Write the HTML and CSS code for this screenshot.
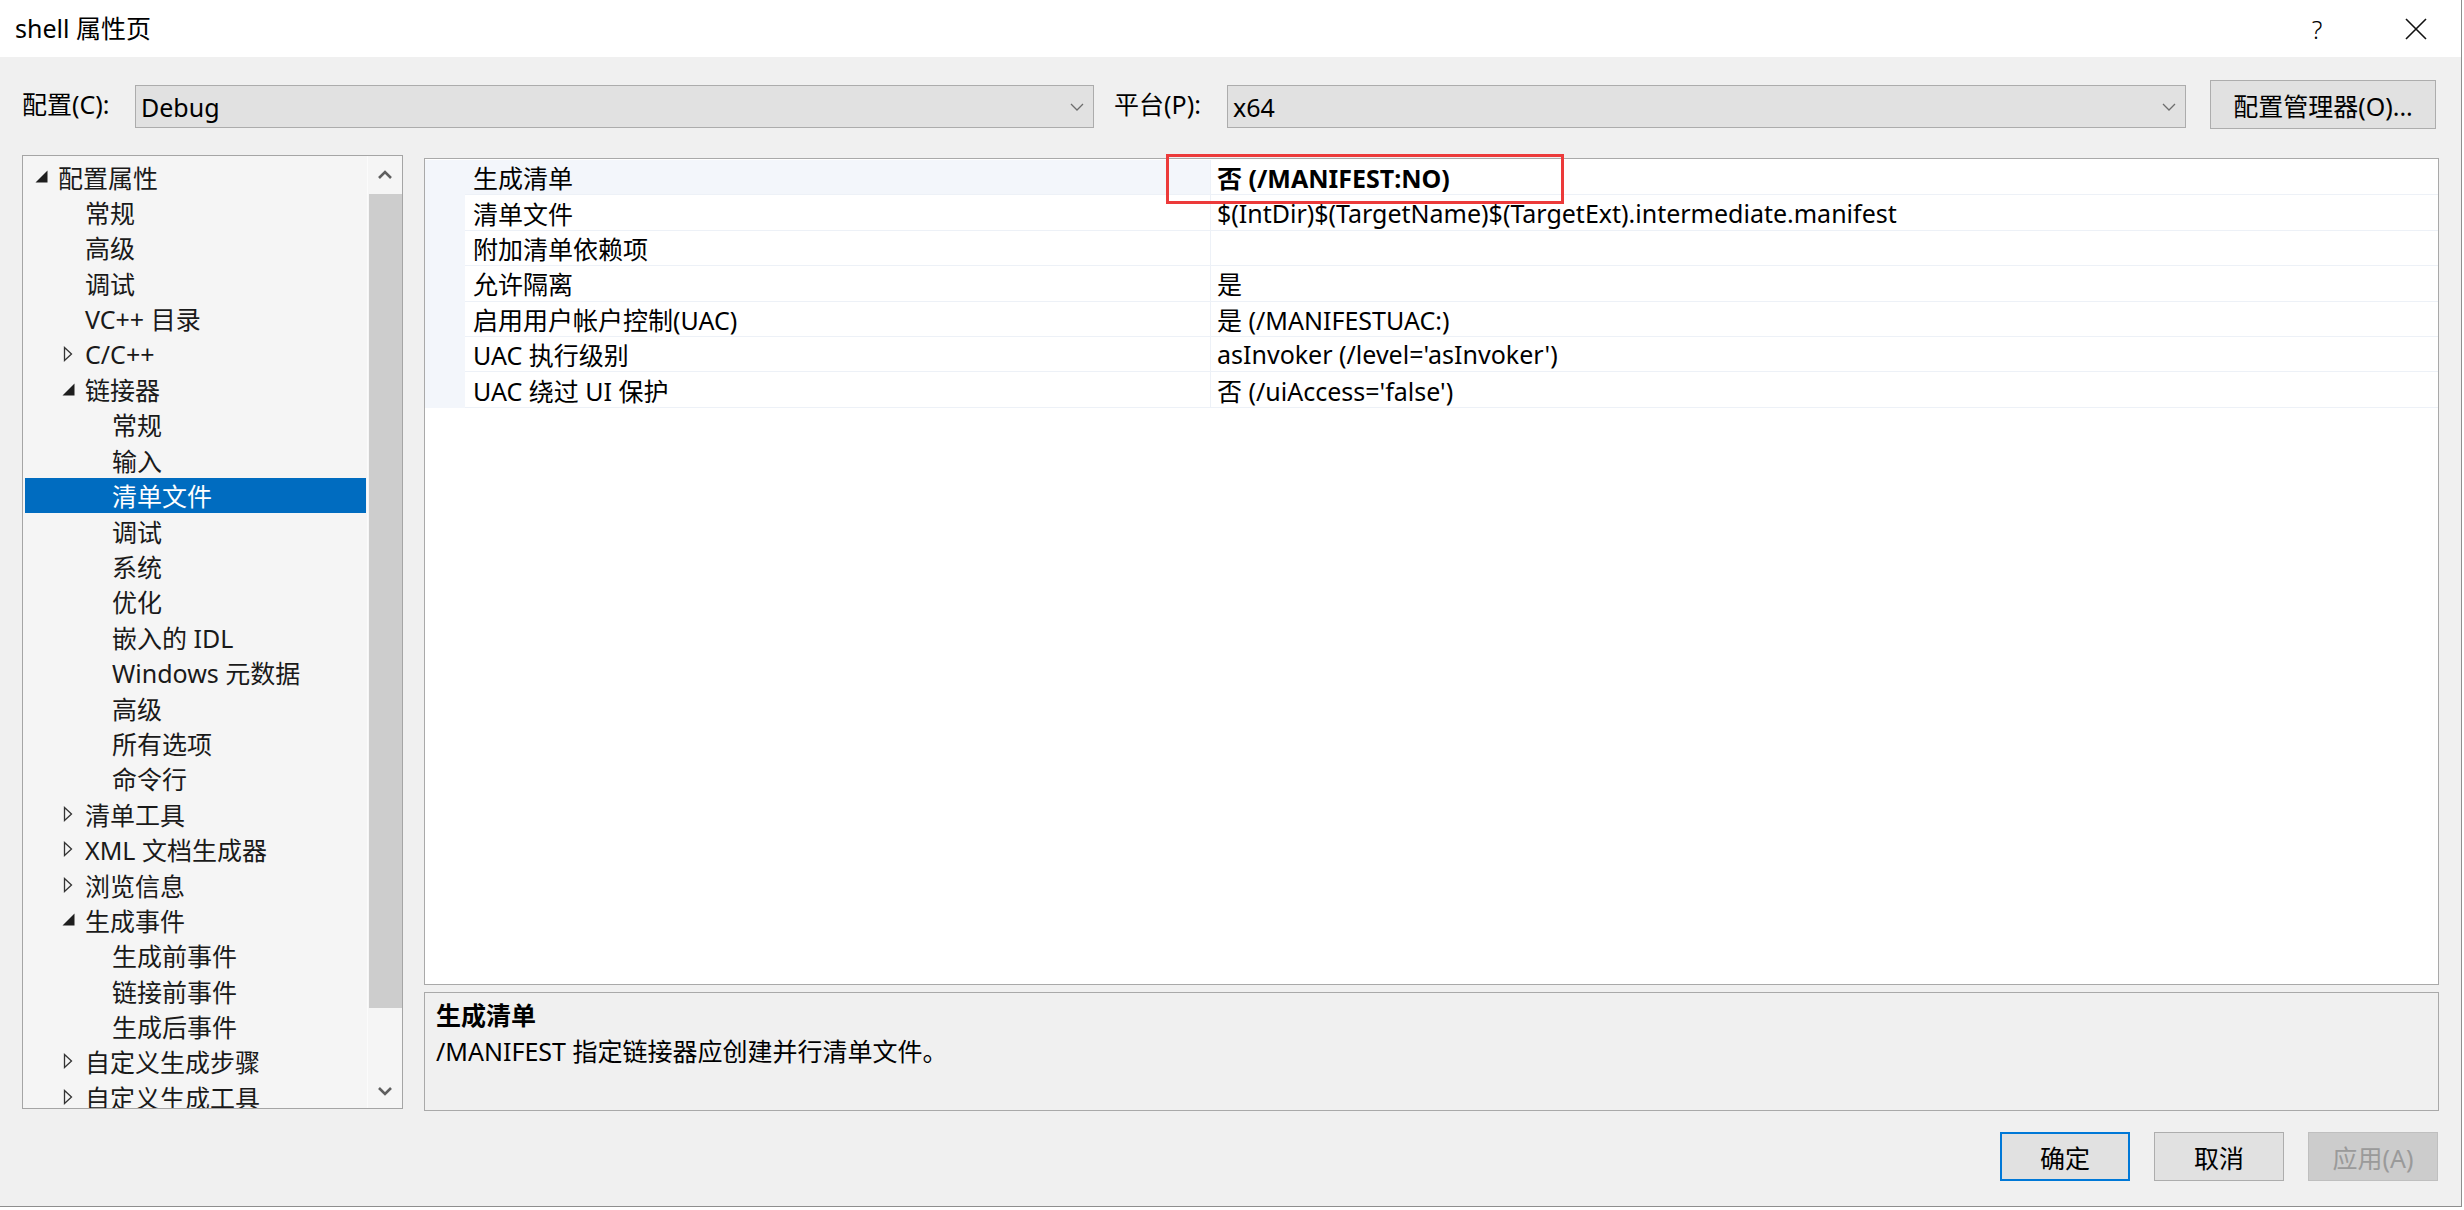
FILE: index.html
```html
<!DOCTYPE html>
<html lang="zh-CN">
<head>
<meta charset="utf-8">
<title>shell 属性页</title>
<link rel="stylesheet" href="styles.css">
</head>
<body>
<div class="dialog">
  <div class="titlebar">
    <span class="title">shell 属性页</span>
    <span class="tb-help">?</span>
    <span class="tb-close"><svg width="22" height="22" viewBox="0 0 22 22"><path d="M1 1 L21 21 M21 1 L1 21" stroke="#111" stroke-width="1.6" fill="none"/></svg></span>
  </div>

  <div class="config-row">
    <span class="cfg-label">配置(C):</span>
    <div class="combo"><span class="combo-text">Debug</span><svg class="chev" width="14" height="8" viewBox="0 0 14 8"><path d="M1 1 L7 7 L13 1" fill="none" stroke="#6d6d6d" stroke-width="1.3"/></svg></div>
    <span class="cfg-label plat">平台(P):</span>
    <div class="combo"><span class="combo-text">x64</span><svg class="chev" width="14" height="8" viewBox="0 0 14 8"><path d="M1 1 L7 7 L13 1" fill="none" stroke="#6d6d6d" stroke-width="1.3"/></svg></div>
    <button class="btn btn-mgr">配置管理器(O)...</button>
  </div>

  <div class="main">
    <div class="tree">
      <div class="tree-list">
        <div class="node l0"><span class="exp"><svg width="13" height="13" viewBox="0 0 13 13"><path d="M12.5 0.5 V12.5 H0.5 Z" fill="#1e1e1e"/></svg></span><span class="label">配置属性</span></div>
        <div class="node l1"><span class="exp"></span><span class="label">常规</span></div>
        <div class="node l1"><span class="exp"></span><span class="label">高级</span></div>
        <div class="node l1"><span class="exp"></span><span class="label">调试</span></div>
        <div class="node l1"><span class="exp"></span><span class="label">VC++ 目录</span></div>
        <div class="node l1"><span class="exp"><svg class="col" width="10" height="16" viewBox="0 0 10 16"><path d="M1.5 1.5 L8.5 8 L1.5 14.5 Z" fill="none" stroke="#333" stroke-width="1.3"/></svg></span><span class="label">C/C++</span></div>
        <div class="node l1"><span class="exp"><svg width="13" height="13" viewBox="0 0 13 13"><path d="M12.5 0.5 V12.5 H0.5 Z" fill="#1e1e1e"/></svg></span><span class="label">链接器</span></div>
        <div class="node l2"><span class="exp"></span><span class="label">常规</span></div>
        <div class="node l2"><span class="exp"></span><span class="label">输入</span></div>
        <div class="node l2 selected"><span class="exp"></span><span class="label">清单文件</span></div>
        <div class="node l2"><span class="exp"></span><span class="label">调试</span></div>
        <div class="node l2"><span class="exp"></span><span class="label">系统</span></div>
        <div class="node l2"><span class="exp"></span><span class="label">优化</span></div>
        <div class="node l2"><span class="exp"></span><span class="label">嵌入的 IDL</span></div>
        <div class="node l2"><span class="exp"></span><span class="label">Windows 元数据</span></div>
        <div class="node l2"><span class="exp"></span><span class="label">高级</span></div>
        <div class="node l2"><span class="exp"></span><span class="label">所有选项</span></div>
        <div class="node l2"><span class="exp"></span><span class="label">命令行</span></div>
        <div class="node l1"><span class="exp"><svg class="col" width="10" height="16" viewBox="0 0 10 16"><path d="M1.5 1.5 L8.5 8 L1.5 14.5 Z" fill="none" stroke="#333" stroke-width="1.3"/></svg></span><span class="label">清单工具</span></div>
        <div class="node l1"><span class="exp"><svg class="col" width="10" height="16" viewBox="0 0 10 16"><path d="M1.5 1.5 L8.5 8 L1.5 14.5 Z" fill="none" stroke="#333" stroke-width="1.3"/></svg></span><span class="label">XML 文档生成器</span></div>
        <div class="node l1"><span class="exp"><svg class="col" width="10" height="16" viewBox="0 0 10 16"><path d="M1.5 1.5 L8.5 8 L1.5 14.5 Z" fill="none" stroke="#333" stroke-width="1.3"/></svg></span><span class="label">浏览信息</span></div>
        <div class="node l1"><span class="exp"><svg width="13" height="13" viewBox="0 0 13 13"><path d="M12.5 0.5 V12.5 H0.5 Z" fill="#1e1e1e"/></svg></span><span class="label">生成事件</span></div>
        <div class="node l2"><span class="exp"></span><span class="label">生成前事件</span></div>
        <div class="node l2"><span class="exp"></span><span class="label">链接前事件</span></div>
        <div class="node l2"><span class="exp"></span><span class="label">生成后事件</span></div>
        <div class="node l1"><span class="exp"><svg class="col" width="10" height="16" viewBox="0 0 10 16"><path d="M1.5 1.5 L8.5 8 L1.5 14.5 Z" fill="none" stroke="#333" stroke-width="1.3"/></svg></span><span class="label">自定义生成步骤</span></div>
        <div class="node l1"><span class="exp"><svg class="col" width="10" height="16" viewBox="0 0 10 16"><path d="M1.5 1.5 L8.5 8 L1.5 14.5 Z" fill="none" stroke="#333" stroke-width="1.3"/></svg></span><span class="label">自定义生成工具</span></div>
      </div>
      <div class="vscroll">
        <div class="sb-arrow sb-up"><svg width="16" height="10" viewBox="0 0 16 10"><path d="M2 8 L8 2 L14 8" fill="none" stroke="#5f5f5f" stroke-width="2.6"/></svg></div>
        <div class="sb-thumb"></div>
        <div class="sb-rest"><svg width="16" height="10" viewBox="0 0 16 10"><path d="M2 2 L8 8 L14 2" fill="none" stroke="#5f5f5f" stroke-width="2.6"/></svg></div>
      </div>
    </div>

    <div class="right">
      <div class="grid">
        <div class="grid-rows">
          <div class="prow current"><div class="gut"></div><div class="pname">生成清单</div><div class="pval bold">否 (/MANIFEST:NO)</div></div>
          <div class="prow"><div class="gut"></div><div class="pname">清单文件</div><div class="pval">$(IntDir)$(TargetName)$(TargetExt).intermediate.manifest</div></div>
          <div class="prow"><div class="gut"></div><div class="pname">附加清单依赖项</div><div class="pval"></div></div>
          <div class="prow"><div class="gut"></div><div class="pname">允许隔离</div><div class="pval">是</div></div>
          <div class="prow"><div class="gut"></div><div class="pname">启用用户帐户控制(UAC)</div><div class="pval">是 (/MANIFESTUAC:)</div></div>
          <div class="prow"><div class="gut"></div><div class="pname">UAC 执行级别</div><div class="pval">asInvoker (/level='asInvoker')</div></div>
          <div class="prow"><div class="gut"></div><div class="pname">UAC 绕过 UI 保护</div><div class="pval">否 (/uiAccess='false')</div></div>
        </div>
        <div class="mark-box"></div>
      </div>
      <div class="desc">
        <div class="desc-title">生成清单</div>
        <div class="desc-text">/MANIFEST 指定链接器应创建并行清单文件。</div>
      </div>
    </div>
  </div>

  <div class="footer">
    <button class="btn btn-foot btn-ok">确定</button>
    <button class="btn btn-foot">取消</button>
    <button class="btn btn-foot btn-disabled">应用(A)</button>
  </div>
</div>
</body>
</html>
```

FILE: styles.css
```css
* { box-sizing: border-box; }

html, body {
  margin: 0;
  padding: 0;
  background: #ffffff;
}

body {
  font-family: "Noto Sans", "Noto Sans CJK SC", sans-serif;
  font-size: 25px;
  color: #000;
  width: 2464px;
  height: 1210px;
  overflow: hidden;
}

.dialog {
  width: 2462px;
  height: 1207px;
  background: #f0f0f0;
  border-right: 1px solid #8e8e8e;
  border-bottom: 1px solid #8e8e8e;
  display: flex;
  flex-direction: column;
}

/* title bar */
.titlebar {
  height: 57px;
  background: #ffffff;
  display: flex;
  align-items: center;
  padding-left: 15px;
}
.title {
  flex: 1;
  font-size: 25px;
  line-height: 1;
}
.tb-help {
  width: 24px;
  text-align: center;
  font-weight: 300;
  font-size: 25px;
  margin-right: 76px;
}
.tb-close {
  display: flex;
  width: 22px;
  margin-right: 34px;
}

/* configuration row */
.config-row {
  margin-top: 23px;
  height: 49px;
  display: flex;
  align-items: flex-start;
  padding-left: 22px;
}
.cfg-label {
  width: 113px;
  line-height: 49px;
  white-space: nowrap;
}
.cfg-label.plat {
  margin-left: 20px;
}
.combo {
  width: 959px;
  height: 43px;
  margin-top: 5px;
  background: #e1e1e1;
  border: 1px solid #acacac;
  display: flex;
  align-items: center;
  padding-left: 5px;
  padding-right: 9px;
}
.combo-text {
  flex: 1;
}
.chev {
  display: block;
}

.btn {
  font-family: inherit;
  font-size: 25px;
  color: #000;
  background: #e1e1e1;
  border: 1px solid #adadad;
  padding: 0;
  margin: 0;
}
.btn-mgr {
  margin-left: 24px;
  width: 226px;
  height: 49px;
}

/* main area */
.main {
  margin-top: 26px;
  padding-left: 22px;
  display: flex;
  align-items: flex-start;
}

.tree {
  width: 381px;
  height: 954px;
  background: #f5f5f5;
  border: 1px solid #a5a5a5;
  display: flex;
}
.tree-list {
  width: 344px;
  height: 100%;
  overflow: hidden;
  padding: 3px 1px 0 2px;
}
.node {
  height: 35.4px;
  display: flex;
  align-items: center;
  white-space: nowrap;
  color: #1a1a1a;
}
.node.l0 { padding-left: 10px; }
.node.l1 { padding-left: 37px; }
.node.l2 { padding-left: 64px; }
.exp {
  width: 23px;
  height: 100%;
  display: flex;
  align-items: center;
}
.exp svg { display: block; }
.exp svg.col { margin-left: 1px; }
.node.selected {
  background: #006cc0;
  color: #ffffff;
}

.vscroll {
  width: 35px;
  height: 100%;
  border-left: 1px solid #fbfbfb;
  display: flex;
  flex-direction: column;
  align-items: center;
}
.sb-arrow {
  height: 38px;
  width: 100%;
  display: flex;
  align-items: center;
  justify-content: center;
}
.sb-thumb {
  width: 33px;
  height: 814px;
  background: #cdcdcd;
}
.sb-rest {
  flex: 1;
  width: 100%;
  display: flex;
  align-items: flex-end;
  justify-content: center;
  padding-bottom: 12px;
}

/* right column */
.right {
  margin-left: 21px;
  margin-top: 3px;
  width: 2015px;
  display: flex;
  flex-direction: column;
  gap: 7px;
}

.grid {
  position: relative;
  height: 827px;
  background: #ffffff;
  border: 1px solid #a9a9a9;
}
.grid-rows {
  padding-top: 1px;
}
.prow {
  height: 35.4px;
  display: flex;
  white-space: nowrap;
}
.gut {
  width: 40px;
  background: #f3f6fb;
}
.pname {
  width: 746px;
  padding-left: 8px;
  display: flex;
  align-items: center;
  border-bottom: 1px solid #edf1f7;
  border-right: 1px solid #edf1f7;
}
.prow.current .pname {
  background: #f3f6fb;
}
.pval {
  flex: 1;
  padding-left: 6px;
  display: flex;
  align-items: center;
  border-bottom: 1px solid #edf1f7;
}
.pval.bold {
  font-weight: 700;
}

.mark-box {
  position: absolute;
  left: 741px;
  top: -5px;
  width: 398px;
  height: 50px;
  border: 3px solid #ec3a3a;
}

.desc {
  height: 119px;
  background: #f0f0f0;
  border: 1px solid #a9a9a9;
  padding: 4px 11px 0;
  line-height: 36px;
}
.desc-title {
  font-weight: 700;
}

/* footer */
.footer {
  margin-top: 21px;
  display: flex;
  justify-content: flex-end;
  gap: 24px;
  padding-right: 23px;
}
.btn-foot {
  width: 130px;
  height: 49px;
}
.btn-ok {
  border: 2px solid #0078d7;
}
.btn-disabled {
  background: #cccccc;
  border-color: #bfbfbf;
  color: #9a9a9a;
}
```
